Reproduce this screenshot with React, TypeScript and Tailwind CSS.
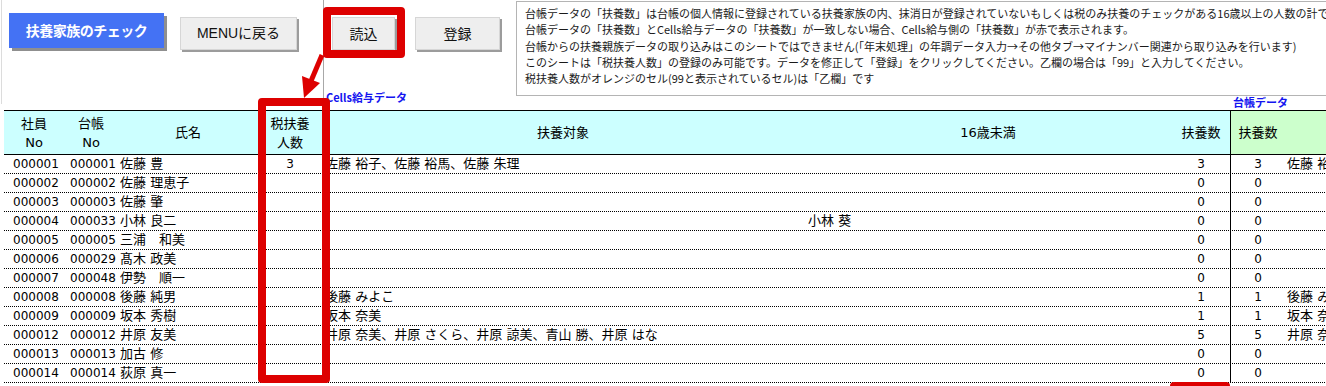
import React from "react";

type Row = {
  emp: string;
  led: string;
  name: string;
  tax: string;
  targets: string;
  under16: string;
  n1: string;
  n2: string;
  names2: string;
};

const rows: Row[] = [
  { emp: "000001", led: "000001", name: "佐藤 豊", tax: "3", targets: "佐藤 裕子、佐藤 裕馬、佐藤 朱理", under16: "", n1: "3", n2: "3", names2: "佐藤 裕子、佐藤 裕馬、佐藤 朱理" },
  { emp: "000002", led: "000002", name: "佐藤 理恵子", tax: "", targets: "", under16: "", n1: "0", n2: "0", names2: "" },
  { emp: "000003", led: "000003", name: "佐藤 肇", tax: "", targets: "", under16: "", n1: "0", n2: "0", names2: "" },
  { emp: "000004", led: "000033", name: "小林 良二", tax: "", targets: "", under16: "小林 葵", n1: "0", n2: "0", names2: "" },
  { emp: "000005", led: "000005", name: "三浦　和美", tax: "", targets: "", under16: "", n1: "0", n2: "0", names2: "" },
  { emp: "000006", led: "000029", name: "髙木 政美", tax: "", targets: "", under16: "", n1: "0", n2: "0", names2: "" },
  { emp: "000007", led: "000048", name: "伊勢　順一", tax: "", targets: "", under16: "", n1: "0", n2: "0", names2: "" },
  { emp: "000008", led: "000008", name: "後藤 純男", tax: "", targets: "後藤 みよこ", under16: "", n1: "1", n2: "1", names2: "後藤 みよこ" },
  { emp: "000009", led: "000009", name: "坂本 秀樹", tax: "", targets: "坂本 奈美", under16: "", n1: "1", n2: "1", names2: "坂本 奈美" },
  { emp: "000012", led: "000012", name: "井原 友美", tax: "", targets: "井原 奈美、井原 さくら、井原 諒美、青山 勝、井原 はな", under16: "", n1: "5", n2: "5", names2: "井原 奈美、井原 さくら" },
  { emp: "000013", led: "000013", name: "加古 修", tax: "", targets: "", under16: "", n1: "0", n2: "0", names2: "" },
  { emp: "000014", led: "000014", name: "荻原 真一", tax: "", targets: "", under16: "", n1: "0", n2: "0", names2: "" },
];

const GRID =
  "grid grid-cols-[60px_54px_140px_64px_482px_368px_58px_55px_320px] w-[1601px]";

const notice = [
  "台帳データの「扶養数」は台帳の個人情報に登録されている扶養家族の内、抹消日が登録されていないもしくは税のみ扶養のチェックがある16歳以上の人数の計です。",
  "台帳データの「扶養数」とCells給与データの「扶養数」が一致しない場合、Cells給与側の「扶養数」が赤で表示されます。",
  "台帳からの扶養親族データの取り込みはこのシートではできません(「年末処理」の年調データ入力→その他タブ→マイナンバー関連から取り込みを行います)",
  "このシートは「税扶養人数」の登録のみ可能です。データを修正して「登録」をクリックしてください。乙欄の場合は「99」と入力してください。",
  "税扶養人数がオレンジのセル(99と表示されているセル)は「乙欄」です",
];

export default function App() {
  return (
    <div
      className="relative w-[1326px] h-[386px] overflow-hidden bg-white text-black"
      style={{ fontFamily: '"DejaVu Sans", "Noto Sans CJK JP", sans-serif' }}
    >
      {/* top area */}
      <div className="flex h-[110px]">
        <div className="w-[516px] shrink-0 flex flex-col">
          <div className="flex items-start h-[90px]">
            <button className="ml-[9px] mt-[13px] w-[155px] h-[35px] bg-[#4472f4] text-white text-[14px] font-bold tracking-[-0.5px] shadow-[3px_3px_0_#8f8f8f] flex items-center justify-center [font-family:'Noto_Sans_CJK_JP',sans-serif]">
              扶養家族のチェック
            </button>
            <button className="ml-[16px] mt-[17px] w-[117px] h-[33px] bg-[#eeeeee] border border-[#d6d6d6] shadow-[2px_2px_0_#9c9c9c] text-[14px] text-[#111] flex items-center justify-center [font-family:'Liberation_Sans','Noto_Sans_CJK_JP',sans-serif]">
              MENUに戻る
            </button>
            <button className="ml-[35px] mt-[17px] w-[63px] h-[33px] bg-[#eeeeee] border border-[#d6d6d6] shadow-[2px_2px_0_#9c9c9c] text-[14px] text-[#111] flex items-center justify-center [font-family:'Noto_Sans_CJK_JP',sans-serif]">
              読込
            </button>
            <button className="ml-[20px] mt-[17px] w-[85px] h-[33px] bg-[#eeeeee] border border-[#d6d6d6] shadow-[2px_2px_0_#9c9c9c] text-[14px] text-[#111] flex items-center justify-center [font-family:'Noto_Sans_CJK_JP',sans-serif]">
              登録
            </button>
          </div>
          <div className="pl-[326px] text-[11px] leading-[14px] font-bold text-[#1414f0] whitespace-nowrap [font-family:'Noto_Sans_CJK_JP',sans-serif]">
            Cells給与データ
          </div>
        </div>
        <div className="flex-1 min-w-0 flex flex-col">
          <div className="mt-[1px] h-[95px] w-[880px] shrink-0 border border-[#b4b4b4] bg-white pl-[8px] pt-[3px] text-[11px] leading-[16.3px] text-[#1a1a1a] whitespace-nowrap [font-family:'Noto_Sans_CJK_JP',sans-serif]">
            {notice.map((t, i) => (
              <div key={i}>{t}</div>
            ))}
          </div>
          <div className="pl-[717px] text-[11px] leading-[12px] font-bold text-[#1414f0] whitespace-nowrap [font-family:'Noto_Sans_CJK_JP',sans-serif]">
            台帳データ
          </div>
        </div>
      </div>

      {/* table */}
      <div className="pl-[4px]">
        <div className={`${GRID} h-[45px] border-y border-black text-[13px]`}>
          <div className="bg-[#ccffff] flex flex-col items-center justify-center leading-[19px]">
            <span>社員</span>
            <span>No</span>
          </div>
          <div className="bg-[#ccffff] flex flex-col items-center justify-center leading-[19px]">
            <span>台帳</span>
            <span>No</span>
          </div>
          <div className="bg-[#ccffff] flex items-center justify-center">氏名</div>
          <div className="bg-[#ccffff] flex flex-col items-center justify-center leading-[19px]">
            <span>税扶養</span>
            <span>人数</span>
          </div>
          <div className="bg-[#ccffff] flex items-center justify-center">扶養対象</div>
          <div className="bg-[#ccffff] flex items-center justify-center">16歳未満</div>
          <div className="bg-[#ccffff] flex items-center justify-center">扶養数</div>
          <div className="bg-[#ccffcc] border-l border-black flex items-center justify-center">扶養数</div>
          <div className="bg-[#ccffcc]" />
        </div>
        {rows.map((r, i) => (
          <div
            key={i}
            className={`${GRID} h-[19px] border-b border-dotted border-black leading-[18px] whitespace-nowrap`}
          >
            <div className="pl-[9px] text-[12px]">{r.emp}</div>
            <div className="pl-[6px] text-[12px]">{r.led}</div>
            <div className="pl-[2px] text-[13px]">{r.name}</div>
            <div className="text-center text-[12px]">{r.tax}</div>
            <div className="pl-[3px] text-[13px] overflow-hidden">{r.targets}</div>
            <div className="pl-[4px] text-[13px]">{r.under16}</div>
            <div className="text-center text-[12px]">{r.n1}</div>
            <div className="border-l border-black text-center text-[12px]">{r.n2}</div>
            <div className="pl-[2px] text-[13px]">{r.names2}</div>
          </div>
        ))}
      </div>

      {/* pane split lines */}
      <div className="absolute left-[323px] top-0 w-px h-[110px] bg-[#a8a8a8]" />
      <div className="absolute left-[1px] top-0 w-px h-[104px] bg-[#dcdcdc]" />

      {/* annotations */}
      <div className="absolute left-[323px] top-[7px] w-[82px] h-[51px] border-[8px] border-[#dd0000] rounded-[4px]" />
      <div className="absolute left-[258px] top-[98px] w-[72px] h-[285px] border-[8px] border-[#dd0000] rounded-[4px]" />
      <div className="absolute left-[1170px] top-[382px] w-[60px] h-[40px] border-[8px] border-[#dd0000] rounded-[4px]" />
      <svg
        className="absolute left-0 top-0"
        width="1326"
        height="386"
        viewBox="0 0 1326 386"
        style={{ pointerEvents: "none" }}
      >
        <line x1="322" y1="55" x2="311" y2="81" stroke="#dd0000" strokeWidth="5" />
        <polygon points="302,76 320,83 304,98" fill="#dd0000" />
      </svg>
    </div>
  );
}
